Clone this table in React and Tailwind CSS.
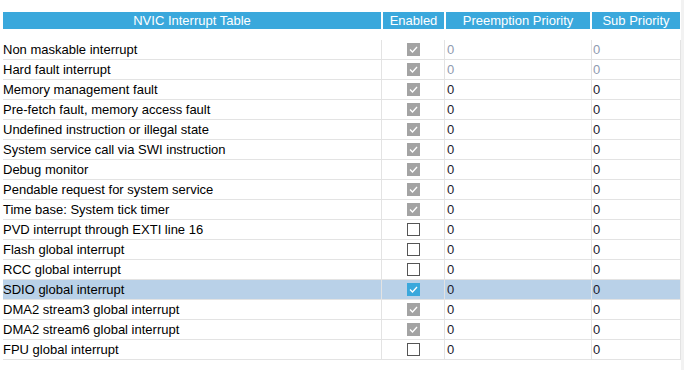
import React from "react";

const rows = [
  { name: "Non maskable interrupt", state: "dis", dim: true },
  { name: "Hard fault interrupt", state: "dis", dim: true },
  { name: "Memory management fault", state: "dis" },
  { name: "Pre-fetch fault, memory access fault", state: "dis" },
  { name: "Undefined instruction or illegal state", state: "dis" },
  { name: "System service call via SWI instruction", state: "dis" },
  { name: "Debug monitor", state: "dis" },
  { name: "Pendable request for system service", state: "dis" },
  { name: "Time base: System tick timer", state: "dis" },
  { name: "PVD interrupt through EXTI line 16", state: "off" },
  { name: "Flash global interrupt", state: "off" },
  { name: "RCC global interrupt", state: "off" },
  { name: "SDIO global interrupt", state: "on", sel: true },
  { name: "DMA2 stream3 global interrupt", state: "dis" },
  { name: "DMA2 stream6 global interrupt", state: "dis" },
  { name: "FPU global interrupt", state: "off" },
];

function Check({ state }) {
  if (state === "off") {
    return <div className="w-[13px] h-[13px] border border-[#555555] bg-white" />;
  }
  const bg = state === "on" ? "bg-[#3aa8dc]" : "bg-[#a3a3a3]";
  return (
    <div className={`w-[13px] h-[13px] ${bg} flex items-center justify-center`}>
      <svg width="13" height="13" viewBox="0 0 13 13">
        <polyline points="3,6.5 5.5,9 10,4" fill="none" stroke="white" strokeWidth="1.3" />
      </svg>
    </div>
  );
}

export default function App() {
  return (
    <div
      className="w-[684px] h-[370px] bg-white relative overflow-hidden"
      style={{ fontFamily: '"Liberation Sans", Arial, sans-serif' }}
    >
      <div className="absolute right-0 top-0 w-[3px] h-full bg-[#f2f2f2]" />
      <div className="pl-[3px] pt-[12px]">
        <div className="flex gap-[2px] h-[17px] text-white text-[13px] leading-[17px]">
          <div className="w-[378px] bg-[#3aa8dc] text-center">NVIC Interrupt Table</div>
          <div className="w-[61px] bg-[#3aa8dc] text-center">Enabled</div>
          <div className="w-[144px] bg-[#3aa8dc] text-center">Preemption Priority</div>
          <div className="w-[88px] bg-[#3aa8dc] text-center">Sub Priority</div>
        </div>
        <div className="mt-[11px]">
          {rows.map((r, i) => (
            <div
              key={i}
              className={`flex h-[20px] w-[678px] border-b border-[#e3e3e3] text-[13px] leading-[19px] ${
                r.sel ? "bg-[#b9d1e8]" : "bg-white"
              }`}
            >
              <div className="w-[378px] text-black whitespace-nowrap">{r.name}</div>
              <div className="w-[63px] border-l border-[#e3e3e3] flex items-center justify-center">
                <Check state={r.state} />
              </div>
              <div
                className={`w-[147px] border-l border-[#e3e3e3] pl-[2px] ${
                  r.dim ? "text-[#8f9bb0]" : "text-[#1a1a2e]"
                }`}
              >
                0
              </div>
              <div
                className={`w-[90px] border-l border-r border-[#e3e3e3] pl-[1px] ${
                  r.dim ? "text-[#8f9bb0]" : "text-[#1a1a2e]"
                }`}
              >
                0
              </div>
            </div>
          ))}
        </div>
      </div>
    </div>
  );
}
